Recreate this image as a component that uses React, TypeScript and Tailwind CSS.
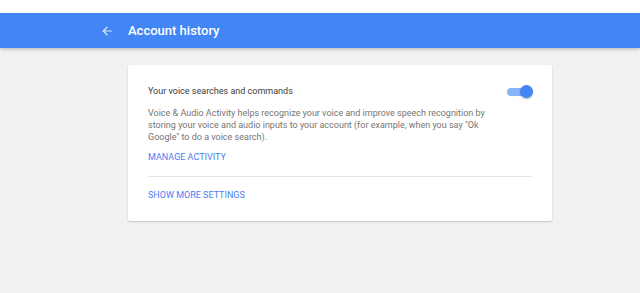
export default function App() {
  return (
    <div className="flex h-[293px] w-[640px] flex-col overflow-hidden bg-[#f2f2f2]" style={{ fontFamily: "Roboto, 'Liberation Sans', sans-serif" }}>
      <div className="h-[13px] bg-white" />
      <header className="relative z-10 flex h-[35px] items-center bg-[#4285f4] shadow-[0_2px_3px_rgba(0,0,0,0.18)]">
        <div className="flex items-center pl-[100px]">
          <svg width="14" height="14" viewBox="0 0 24 24" className="text-white/80">
            <path d="M20 11H7.83l5.59-5.59L12 4l-8 8 8 8 1.41-1.41L7.83 13H20v-2z" fill="currentColor" />
          </svg>
          <h1 className="ml-[14px] text-[13px] font-medium text-white">Account history</h1>
        </div>
      </header>
      <main className="pl-[128px] pt-[17px]">
        <section className="w-[424px] rounded-[2px] bg-white px-5 pb-[20px] pt-[20px] shadow-[0_1px_2px_rgba(0,0,0,0.2)]">
          <div className="flex items-start justify-between">
            <h2 className="text-[9px] leading-[12px] text-[#3c3c3c]">Your voice searches and commands</h2>
            <div className="relative mr-[1px] mt-0 h-[13px] w-[24px]">
              <div className="absolute left-0 top-[3px] h-[8px] w-[20px] rounded-full bg-[#8ab4f8]" />
              <div className="absolute right-[-2px] top-0 h-[13px] w-[13px] rounded-full bg-[#4285f4] shadow-[0_1px_2px_rgba(0,0,0,0.3)]" />
            </div>
          </div>
          <p className="mt-[9px] max-w-[346px] text-[9px] leading-[12px] text-[#757575]">
            Voice &amp; Audio Activity helps recognize your voice and improve speech recognition by storing your voice and audio inputs to your account (for example, when you say "Ok Google" to do a voice search).
          </p>
          <a className="mt-[9px] block text-[9px] leading-[11px] text-[#4d7cf3]">MANAGE ACTIVITY</a>
          <div className="mt-[13px] h-px bg-[#e4e4e4]" />
          <a className="mt-[13px] block text-[9px] leading-[11px] text-[#4d7cf3]">SHOW MORE SETTINGS</a>
        </section>
      </main>
    </div>
  );
}
